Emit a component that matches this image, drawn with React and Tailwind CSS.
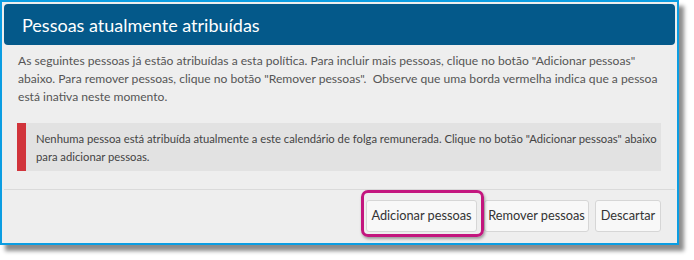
export default function App() {
	const font = { fontFamily: 'Lato, "Noto Sans", sans-serif' };

	return (
		<div className="w-[694px] h-[260px] bg-white" style={font}>
			<div className="w-[679px] h-[245px] border-2 border-[#0b9de2] bg-[#eeeeee] p-[2px] shadow-[5px_6px_4px_rgba(0,0,0,0.45)] flex flex-col overflow-hidden">
				{/* header */}
				<div className="h-[41px] rounded-[4px] bg-[#04598a] flex items-center pl-[18px]">
					<h2 className="text-white text-[18px] leading-none">Pessoas atualmente atribuídas</h2>
				</div>

				<p className="mt-[7px] pl-[14px] text-[12.1px] leading-[18px] text-[#555] whitespace-nowrap">
					As seguintes pessoas já estão atribuídas a esta política. Para incluir mais pessoas, clique no botão "Adicionar pessoas"
					<br />
					abaixo. Para remover pessoas, clique no botão "Remover pessoas".&nbsp; Observe que uma borda vermelha indica que a pessoa
					<br />
					está inativa neste momento.
				</p>

				{/* alert */}
				<div className="mt-[17px] ml-[13px] w-[644px] h-[48px] bg-[#e2e2e2] border-l-[9px] border-[#d1343b] pl-[10px] pt-[7px]">
					<p className="text-[11.25px] leading-[18px] text-[#444] whitespace-nowrap">
						Nenhuma pessoa está atribuída atualmente a este calendário de folga remunerada. Clique no botão "Adicionar pessoas" abaixo
						<br />
						para adicionar pessoas.
					</p>
				</div>

				<div className="mt-[18px] h-px bg-[#dadada]" />

				{/* buttons */}
				<div className="mt-[10px] flex justify-end pr-[14px] text-[12.75px] text-[#333] whitespace-nowrap">
					<div className="relative">
						<button className="w-[111px] h-[32px] rounded-[3px] border border-[#d6d6d6] bg-[#f8f8f8]">Adicionar pessoas</button>
						<div className="absolute left-[-5px] top-[-10px] w-[123px] h-[47px] rounded-[7px] border-[3px] border-[#c3167e] shadow-[1px_2px_3px_rgba(0,0,0,0.35)] pointer-events-none" />
					</div>
					<button className="ml-[7px] w-[105px] h-[32px] rounded-[3px] border border-[#d6d6d6] bg-[#f8f8f8]">Remover pessoas</button>
					<button className="ml-[6px] w-[66px] h-[32px] rounded-[3px] border border-[#d6d6d6] bg-[#f8f8f8]">Descartar</button>
				</div>
			</div>
		</div>
	);
}
